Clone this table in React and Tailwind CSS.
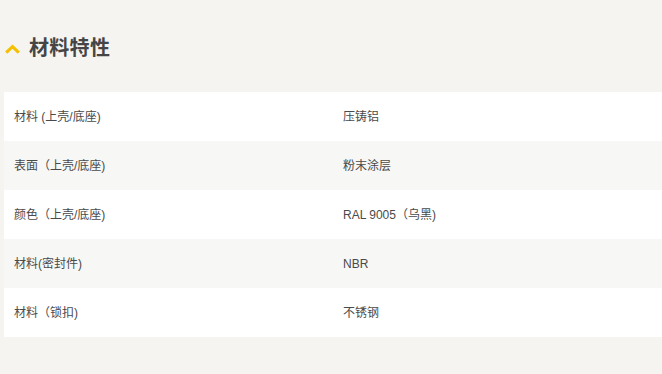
import React from 'react';

const rows = [
    ['材料 (上壳/底座)', '压铸铝'],
    ['表面（上壳/底座)', '粉末涂层'],
    ['颜色（上壳/底座)', 'RAL 9005（乌黑)'],
    ['材料(密封件)', 'NBR'],
    ['材料（锁扣)', '不锈钢'],
];

const App = () => {
    return (
        <div
            className="w-[662px] h-[374px] bg-[#f5f4f1] overflow-hidden text-[#444]"
            style={{ fontFamily: '"Liberation Sans", "Noto Sans CJK SC", sans-serif' }}
        >
            <div className="flex items-center h-[36px] mt-[30px] pl-[5px] gap-[9px]">
                <svg width="15" height="10" viewBox="0 0 15 10" className="mt-[2px]">
                    <path d="M1.2 8.6 L7.5 2.6 L13.8 8.6" fill="none" stroke="#f5c000" strokeWidth="3.2" strokeLinejoin="miter" />
                </svg>
                <h2 className="text-[20px] font-bold text-[#454545] tracking-[0.3px]">材料特性</h2>
            </div>
            <div className="mt-[26px] ml-[4px]">
                {rows.map(([label, value], idx) => (
                    <div
                        key={idx}
                        className={`grid grid-cols-2 h-[49px] items-center text-[12px] text-[#4a4a4a] ${idx % 2 === 0 ? 'bg-white' : 'bg-[#f7f7f5]'}`}
                    >
                        <div className="pl-[10px]">{label}</div>
                        <div className="pl-[10px]">{value}</div>
                    </div>
                ))}
            </div>
        </div>
    );
};

export default App;
